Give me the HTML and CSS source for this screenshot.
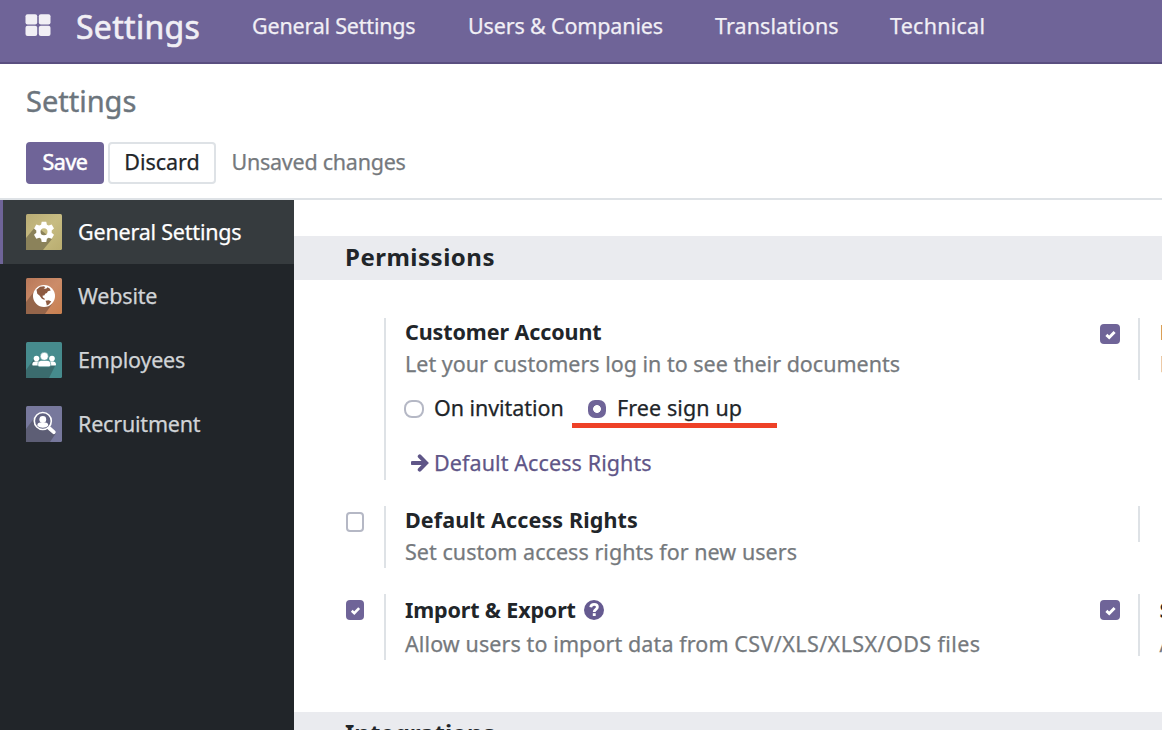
FILE: index.html
```html
<!DOCTYPE html>
<html lang="en">
<head>
<meta charset="utf-8">
<title>Settings</title>
<link rel="stylesheet" href="styles.css">
</head>
<body>
<svg class="defs" width="0" height="0" aria-hidden="true">
  <symbol id="check" viewBox="0 0 20 20"><path d="M6.400 10.900 9.200 13.500 14.600 7.900" fill="none" stroke="#fff" stroke-width="2.900"/></symbol>
</svg>
<header class="navbar">
  <svg class="apps" width="26" height="22" viewBox="0 0 26 22" fill="#f1eff5"><rect x=".5" y=".3" width="11.700" height="10.200" rx="2"/><rect x="13.800" y=".3" width="11.700" height="10.200" rx="2"/><rect x=".5" y="11.800" width="11.700" height="10.200" rx="2"/><rect x="13.800" y="11.800" width="11.700" height="10.200" rx="2"/></svg>
  <span class="brand">Settings</span>
  <nav class="menu">
    <a class="m1">General Settings</a><a class="m2">Users &amp; Companies</a><a class="m3">Translations</a><a class="m4">Technical</a>
  </nav>
</header>
<section class="control">
  <h1 class="crumb">Settings</h1>
  <div class="actions">
    <button class="btn save">Save</button>
    <button class="btn discard">Discard</button>
    <span class="unsaved">Unsaved changes</span>
  </div>
</section>
<div class="layout">
  <aside class="sidebar">
    <a class="tab active">
      <svg width="36" height="36" viewBox="0 0 36 36"><defs><linearGradient id="g1" x2="1" y2="1"><stop stop-color="#b9ac75"/><stop offset=".5" stop-color="#c7bc82"/><stop offset="1" stop-color="#b9ad70"/></linearGradient></defs><rect width="36" height="36" rx="1.500" fill="url(#g1)"/><path d="M0 24 10 12 26 25 17 36H0z" fill="#8b825a"/><path transform="translate(0 .2)" d="M15.700 7.500h4.600l.6 3 1.800.9 3-1 2.300 4-2.300 2v2.200l2.300 2-2.300 4-3-1-1.800 1-.6 3.300h-4.600l-.6-3.300-1.800-1-3 1-2.300-4 2.300-2v-2.200l-2.300-2 2.300-4 3 1 1.800-.9zM18 14.100a3.500 3.500 0 1 0 0 7 3.500 3.500 0 0 0 0-7z" fill="#fff" fill-rule="evenodd"/></svg>
      <span class="t1">General Settings</span></a>
    <a class="tab">
      <svg width="36" height="36" viewBox="0 0 36 36"><defs><linearGradient id="g2" x2="1" y2="1"><stop stop-color="#b9795a"/><stop offset=".5" stop-color="#cc8c69"/><stop offset="1" stop-color="#c9804f"/></linearGradient></defs><rect width="36" height="36" rx="1.500" fill="url(#g2)"/><path d="M0 24 10 11 26 26 19 36H0z" fill="#95654a"/><circle cx="18" cy="18" r="11" fill="#fff"/><path d="m10.500 11.800 3.500-3 4-.6 1.300 1-1.700 1.300 2.500.2 1.400-1.500 2.200 1.200 1 2.200-2.800.7-1 1.700-1.800.7-.6 1.600-2 .4.4 1.700 1.500.8.300 1.800-2.800-1.200-2.400-3.300-2.200-1.800zM19.500 22.800l3.300-.5 2.500 1.300-2.500 3-2 1-.6-3z" fill="#8d5a40"/></svg>
      <span class="t2">Website</span></a>
    <a class="tab">
      <svg width="36" height="36" viewBox="0 0 36 36"><rect width="36" height="36" rx="1.500" fill="#468b8d"/><path d="M0 28 8 17 30 22 23 36H0z" fill="#3b6c6e"/><g fill="#fff"><circle cx="10.500" cy="16.600" r="2.800"/><circle cx="26" cy="16.600" r="2.800"/><path d="M6.300 22.500c0-2 1.200-3 3-3h4v4H7.300c-.7 0-1-.4-1-1zM30 22.500c0-2-1.200-3-3-3h-4v4h6c.7 0 1-.4 1-1z"/><path d="M11.800 22.600c0-2.900 1.400-4.200 3.900-4.200h5.100c2.500 0 3.900 1.300 3.900 4.200 0 1.600-.7 2.200-1.900 2.200h-9.100c-1.200 0-1.900-.6-1.900-2.200z" stroke="#468b8d" stroke-width=".6"/><circle cx="18.300" cy="14.300" r="4" stroke="#468b8d" stroke-width=".5"/></g></svg>
      <span class="t3">Employees</span></a>
    <a class="tab">
      <svg width="36" height="36" viewBox="0 0 36 36"><rect width="36" height="36" rx="1.500" fill="#77789c"/><path d="M0 23 9 11 30 27 24 36H0z" fill="#5d5e75"/><path d="m22.500 21.500 5.300 4.700" stroke="#fff" stroke-width="3.800" stroke-linecap="round"/><circle cx="16.800" cy="15" r="8.500" fill="#626381" stroke="#fff" stroke-width="1.600"/><g fill="#fff"><circle cx="16.800" cy="13.500" r="3.400"/><path d="M11.300 19.500c0-2 1.200-3 3-3h5c1.800 0 3 1 3 3-2.500 2.900-8.500 2.900-11 0z"/></g></svg>
      <span class="t4">Recruitment</span></a>
  </aside>
  <main class="content">
    <h2 class="band band-p">Permissions</h2>
    <div class="rows">
      <div class="row r1">
        <div class="check"></div>
        <div class="pane account">
          <h3 class="h-a">Customer Account</h3>
          <p class="p-a">Let your customers log in to see their documents</p>
          <div class="radios">
            <i class="radio"></i><span class="on">On invitation</span>
            <span class="marked"><i class="radio picked"></i><span class="free">Free sign up</span></span>
          </div>
          <a class="link"><svg width="18" height="18" viewBox="0 0 18 18"><path d="M1.500 9H14" fill="none" stroke="#5f5688" stroke-width="4" stroke-linecap="round"/><path d="M8.700 2.300 15.200 9l-6.500 6.700" fill="none" stroke="#5f5688" stroke-width="3.900" stroke-linecap="round"/></svg><span>Default Access Rights</span></a>
        </div>
        <div class="check"><svg class="box wide"><use href="#check"/></svg></div>
        <div class="pane side first"><h3>Password Reset</h3><p>Enable password reset from Login page</p></div>
      </div>
      <div class="row r2">
        <div class="check"><i class="box empty"></i></div>
        <div class="pane"><h3 class="h-d">Default Access Rights</h3><p class="p-d">Set custom access rights for new users</p></div>
        <div class="check"></div>
        <div class="pane side blank"></div>
      </div>
      <div class="row r3">
        <div class="check"><svg class="box"><use href="#check"/></svg></div>
        <div class="pane"><h3 class="h-i">Import &amp; Export<svg class="help" width="20" height="20" viewBox="0 0 20 20"><circle cx="10" cy="10" r="10" fill="#655a90"/><path d="M6.700 7.300C7 5.200 8.300 4.300 10.100 4.300c2 0 3.300 1.100 3.300 2.700 0 2.300-3.200 2.300-3.200 5" fill="none" stroke="#fff" stroke-width="2.800"/><path d="M8.800 13.200h2.900v2.800H8.800z" fill="#fff"/></svg></h3><p class="p-i">Allow users to import data from <span class="formats">CSV/XLS/XLSX/ODS files</span></p></div>
        <div class="check"><svg class="box wide"><use href="#check"/></svg></div>
        <div class="pane side short"><h3>Show Effect</h3><p>Add fun feedback and motivate your employees</p></div>
      </div>
    </div>
    <h2 class="band">Integrations</h2>
  </main>
</div>
</body>
</html>
```
FILE: styles.css
```css
* { box-sizing: border-box; }
body { margin: 0; width: 1162px; height: 730px; overflow: hidden; background: #fff; color: #212529; font: 21.5px/32px "Noto Sans", "Open Sans", sans-serif; -webkit-text-stroke: .25px; white-space: nowrap; display: flex; flex-direction: column; }
h1, h2, h3, p { margin: 0; font-size: inherit; font-weight: inherit; }
svg { display: block; flex: none; }
.defs { position: absolute; }
.navbar { flex: none; height: 64px; background: #6f6498; border-bottom: 2px solid #5a4f80; color: #f1eff5; display: flex; align-items: flex-start; padding-left: 25px; }
.apps { margin-top: 14px; }
.brand { margin-left: 25px; width: 176px; font-size: 32px; line-height: 54px; letter-spacing: .3px; -webkit-text-stroke: .6px; }
.menu { display: flex; padding-top: 10px; }
.m1 { width: 216px; letter-spacing: -.2px; }
.m2 { width: 247px; letter-spacing: -.15px; }
.m3 { width: 175px; letter-spacing: .1px; }
.m4 { letter-spacing: .25px; }
.control { flex: none; height: 136px; border-bottom: 2px solid #dee2e6; padding: 14px 0 0 26px; }
.crumb { font-size: 29px; line-height: 46px; height: 64px; color: #6c757d; -webkit-text-stroke: .4px; }
.actions { display: flex; align-items: center; }
.btn { font: inherit; -webkit-text-stroke: inherit; height: 42px; border-radius: 4px; padding: 0 0 3px; text-align: center; }
.save { width: 78px; background: #6f6498; border: 0; color: #fff; -webkit-text-stroke: .5px; letter-spacing: -.5px; }
.discard { width: 108px; margin-left: 4px; background: #fff; border: 2px solid #dee2e6; color: #212529; }
.unsaved { margin: -2px 0 0 15.5px; color: #75797d; letter-spacing: -.25px; }
.layout { flex: 1; display: flex; min-height: 0; }
.sidebar { flex: none; width: 294px; background: #212529; color: #d0d3d6; }
.tab { display: flex; align-items: center; height: 64px; padding-left: 26px; gap: 16px; }
.tab span { margin-top: -1px; letter-spacing: -.2px; }
.active { background: #363b3e; color: #fff; border-left: 3px solid #6f6498; padding-left: 23px; }
.content { flex: 1; min-width: 0; overflow: hidden; padding-top: 36px; }
.band { height: 44px; background: #eaebef; padding-left: 51px; font-weight: 700; font-size: 24px; line-height: 42px; -webkit-text-stroke: 0; }
.band-p { letter-spacing: .5px; }
.rows { height: 432px; padding: 38px 0 0 52px; }
.row { display: grid; grid-template-columns: 38px 716px 38px 600px; align-items: start; }
.r1 { height: 188px; }
.r2 { height: 88px; }
.check { padding-top: 6px; }
.box { display: block; width: 18px; height: 20px; border-radius: 4px; background: #6f6498; }
.wide { width: 20px; }
.empty { background: #fff; border: 2px solid #b5b8c5; }
.pane { border-left: 2px solid #dee2e6; padding-left: 19px; height: 62px; }
.first { padding-left: 19.8px; }
.pane h3 { font-weight: 700; line-height: 28px; height: 30px; -webkit-text-stroke: 0; }
.pane p { color: #75797d; line-height: 31px; }
.pane .h-a { letter-spacing: -.1px; }
.pane .h-d { letter-spacing: .12px; }
.pane .h-i { letter-spacing: -.15px; }
.p-d { letter-spacing: .04px; }
.p-i { letter-spacing: .1px; }
.formats { letter-spacing: .42px; }
.account { height: 162px; }
.r3 .pane { height: 66px; }
.r3 .pane h3 { line-height: 31px; height: 34px; display: flex; }
.r3 .short { height: 62px; padding-left: 19.5px; }
.pane.blank { height: 36px; }
.help { margin: 6px 0 0 8px; }
.radios { display: flex; height: 44px; padding-top: 13px; align-items: flex-start; }
.radio { flex: none; width: 20px; height: 18px; margin: 8px 10px 0 -1px; border: 2px solid #b5b8c5; border-radius: 8px; }
.on { width: 138px; letter-spacing: -.05px; }
.marked { width: 205px; height: 36px; border-bottom: 5px solid #ee4127; display: flex; padding-left: 16px; }
.picked { width: 18px; margin: 8px 11px 0 0; border: 0; border-radius: 7px; background: radial-gradient(circle, #fff 3.5px, #6f6498 4.3px); }
.free { letter-spacing: .1px; }
.link { display: flex; align-items: center; gap: 5px; color: #5f5688; padding: 23.5px 0 0 6px; letter-spacing: .1px; }
```
